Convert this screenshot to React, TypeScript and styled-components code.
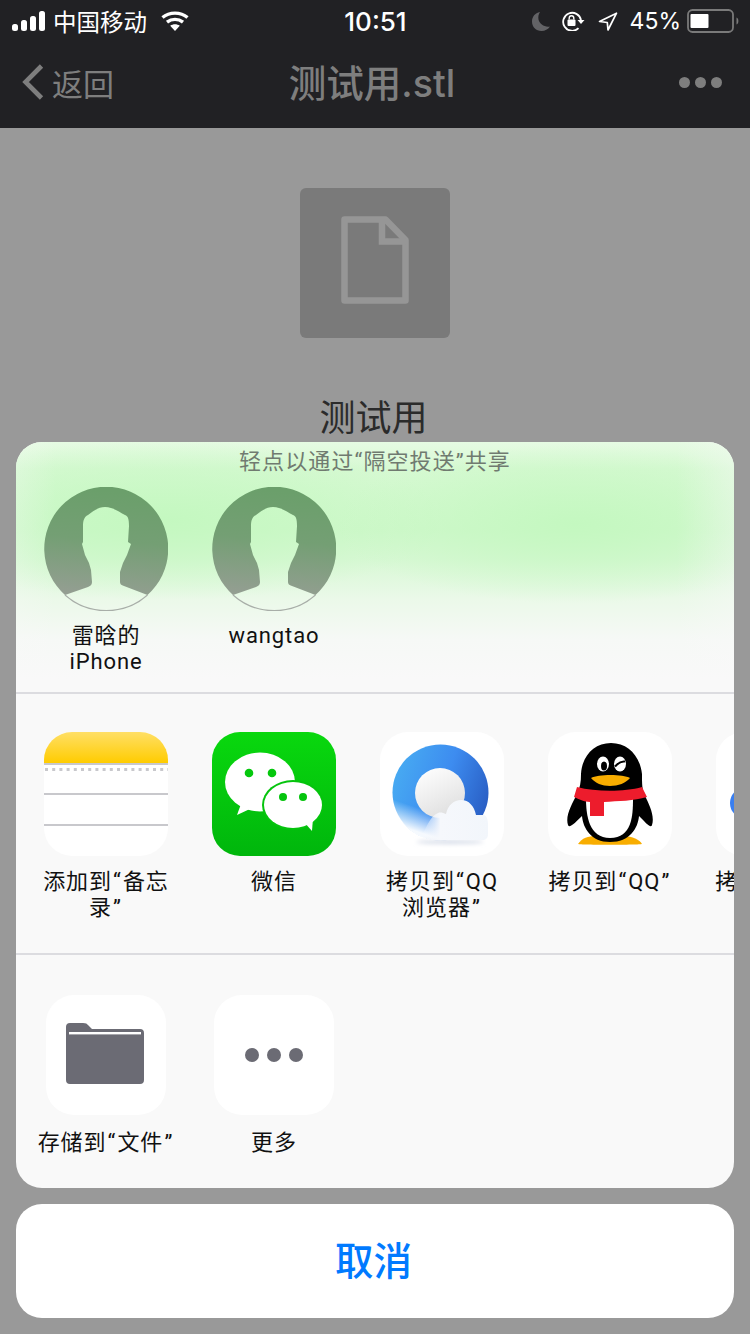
import React from "react";
import styled, { createGlobalStyle } from "styled-components";

const GlobalStyle = createGlobalStyle`
  html, body {
    margin: 0;
    padding: 0;
    background: #999;
  }
`;

const FONT = `Inter, "Noto Sans CJK SC", sans-serif`;
const LABEL_FONT = `Roboto, "Noto Sans CJK SC", sans-serif`;

const Page = styled.div`
  position: relative;
  width: 750px;
  height: 1334px;
  overflow: hidden;
  background: #999;
  font-family: ${FONT};
`;

const Header = styled.header`
  height: 128px;
  background: #212124;
`;

const StatusBar = styled.div`
  display: grid;
  grid-template-columns: 1fr auto 1fr;
  align-items: center;
  height: 42px;
  padding: 0 11px 0 12px;
  color: #fff;
`;

const StatusGroup = styled.div<{ $end?: boolean }>`
  display: flex;
  align-items: center;
  justify-content: ${(p) => (p.$end ? "flex-end" : "flex-start")};
  gap: ${(p) => (p.$end ? 12 : 0)}px;
`;

const Carrier = styled.span`
  margin: 0 14px 0 7px;
  font-size: 23.5px;
`;

const Clock = styled.span`
  font-size: 26px;
  font-weight: 500;
`;

const Percent = styled.span`
  margin: 0 -6px 0 0;
  font-size: 23px;
`;

const NavBar = styled.nav`
  display: grid;
  grid-template-columns: 1fr auto 1fr;
  align-items: center;
  height: 86px;
  box-sizing: border-box;
  padding: 0 28px 6px 22px;
  color: #7e7e7e;
`;

const BackLink = styled.div`
  display: flex;
  align-items: center;
  gap: 8px;
  font-size: 31px;
`;

const NavTitle = styled.div`
  margin-bottom: 3px;
  font-size: 37.5px;
  font-weight: 500;
`;

const MoreDots = styled.div`
  display: flex;
  justify-content: flex-end;
  gap: 5px;
`;

const MoreDot = styled.i`
  width: 11px;
  height: 11px;
  border-radius: 50%;
  background: #7e7e7e;
`;

const FileBody = styled.main`
  display: flex;
  flex-direction: column;
  align-items: center;
  padding-top: 60px;
`;

const FileThumb = styled.div`
  display: flex;
  align-items: center;
  justify-content: center;
  width: 150px;
  height: 150px;
  box-sizing: border-box;
  padding-bottom: 7px;
  border-radius: 6px;
  background: #7a7a7a;
`;

const FileName = styled.div`
  margin-top: 56px;
  padding-right: 3px;
  color: #2b2b2b;
  font-size: 36px;
  line-height: 48px;
`;

const SheetStack = styled.div`
  position: absolute;
  left: 16px;
  right: 16px;
  bottom: 16px;
  display: flex;
  flex-direction: column;
  gap: 16px;
`;

const Sheet = styled.section`
  overflow: hidden;
  border-radius: 26px;
  background: #f9f9f9;
`;

const AirDropSection = styled.div`
  height: 250px;
  box-sizing: border-box;
  background:
    linear-gradient(90deg, rgba(249, 249, 249, 0.25) 0, rgba(249, 249, 249, 0) 40px, rgba(249, 249, 249, 0) 660px, rgba(249, 249, 249, 0.4) 100%),
    radial-gradient(ellipse 240px 80px at 560px 82px, #c4f8c0 0%, rgba(196, 248, 192, 0) 100%),
    radial-gradient(ellipse 280px 80px at 150px 78px, #c4f8c0 0%, rgba(196, 248, 192, 0) 100%),
    linear-gradient(180deg, #e6fbe3 0%, #d6f9d2 11%, #d0f8cc 35%, #d8f8d5 47%, #ebf9e9 63%, #f6f9f6 79%, #f9f9f9 95%);
`;

const AirDropHint = styled.div`
  height: 45px;
  padding-top: 5px;
  box-sizing: border-box;
  color: #707a70;
  font-family: ${LABEL_FONT};
  font-size: 22px;
  letter-spacing: 1.1px;
  line-height: 30px;
  text-align: center;
`;

const Row = styled.div<{ $height: number; $top?: number }>`
  display: flex;
  gap: 16px;
  height: ${(p) => p.$height}px;
  box-sizing: border-box;
  padding: ${(p) => p.$top ?? 0}px 0 0 14px;
  overflow: hidden;
`;

const RowDivider = styled.div`
  border-top: 2px solid #dcdce0;
`;

const Cell = styled.div`
  flex: 0 0 152px;
  display: flex;
  flex-direction: column;
  align-items: center;
`;

const Tile = styled.div<{ $small?: boolean }>`
  flex: none;
  width: ${(p) => (p.$small ? 120 : 124)}px;
  height: ${(p) => (p.$small ? 120 : 124)}px;
  margin: ${(p) => (p.$small ? 2 : 0)}px;
  overflow: hidden;
  border-radius: 28px;
  background: #fff;

  svg {
    display: block;
  }
`;

const Avatar = styled.div`
  width: 124px;
  height: 124px;

  svg {
    display: block;
  }
`;

const Label = styled.div<{ $gap?: number }>`
  width: 140px;
  margin-top: ${(p) => p.$gap ?? 13}px;
  color: #111;
  font-family: ${LABEL_FONT};
  font-size: 22px;
  letter-spacing: 0.9px;
  line-height: 26px;
  text-align: center;
`;

// the curly quotes sit wider on the device than in Roboto
const Quote = styled.span`
  margin: 0 1.2px;
`;

const CancelButton = styled.button`
  display: block;
  width: 100%;
  height: 114px;
  padding: 0 3px 6px 0;
  border: 0;
  border-radius: 26px;
  background: #fff;
  color: #007aff;
  font-family: inherit;
  font-size: 38.5px;
  font-weight: 500;
`;

const SignalIcon = () => (
  <svg width="34" height="20" viewBox="0 0 34 20">
    <rect x="0" y="13" width="6" height="7" rx="2.5" fill="#fff" />
    <rect x="9" y="9" width="6" height="11" rx="2.5" fill="#fff" />
    <rect x="18" y="5" width="6" height="15" rx="2.5" fill="#fff" />
    <rect x="27" y="0" width="6" height="20" rx="2.5" fill="#fff" />
  </svg>
);

const WifiIcon = () => (
  <svg width="28" height="20" viewBox="0 0 28 20" fill="none" stroke="#fff" strokeWidth="3.4">
    <path d="M1.5 6.5C8.5 .6 19.5 .6 26.5 6.5" />
    <path d="M6 11.2C10.8 7.4 17.2 7.4 22 11.2" />
    <path d="M14 20l-4.8-5.2c2.8-2 6.8-2 9.6 0z" fill="#fff" stroke="none" />
  </svg>
);

const MoonIcon = () => (
  <svg width="18" height="19" viewBox="0 0 18 19">
    <path d="M8 0C3 1 0 4.800 0 9.500 0 15 4 19 9.500 19 13 19 16 17.300 18 14.500 12.500 15.500 7.500 12 6.500 7.500 6 4.800 6.500 2.200 8 0z" fill="#636366" />
  </svg>
);

const RotationLockIcon = () => (
  <svg width="24" height="20" viewBox="0 0 24 20" fill="none" stroke="#fff" strokeWidth="1.800">
    <path d="M16.500 17.200A9 9 0 1 1 19 9" />
    <path d="M15.500 9h7l-3.500 4z" fill="#fff" stroke="none" />
    <rect x="5.500" y="8.500" width="8" height="6.500" rx="1" fill="#fff" stroke="none" />
    <path d="M7.200 8.500V7a2.300 2.300 0 0 1 4.600 0v1.500" strokeWidth="1.400" />
  </svg>
);

const LocationIcon = () => (
  <svg width="20" height="19" viewBox="0 0 20 19" fill="none" stroke="#fff" strokeWidth="1.700" strokeLinejoin="round">
    <path d="M18.500 1.200L1.500 9.500l7.800 1 .7 7.500z" />
  </svg>
);

const BatteryIcon = () => (
  <svg width="52" height="24" viewBox="0 0 52 24">
    <rect x="1" y="1" width="45" height="22" rx="4.500" fill="none" stroke="#7a7a7a" strokeWidth="1.800" />
    <rect x="3.500" y="5" width="18" height="14" rx="1" fill="#fff" />
    <path d="M49.500 8.500c2.500 .8 2.500 6.200 0 7z" fill="#7a7a7a" />
  </svg>
);

const ChevronIcon = () => (
  <svg width="22" height="36" viewBox="0 0 22 36" fill="none" stroke="#7e7e7e" strokeWidth="4.600">
    <path d="M19.500 2L3.500 18l16 16" />
  </svg>
);

const FileGlyph = () => (
  <svg width="68" height="88" viewBox="0 0 68 88" fill="none" stroke="#969696" strokeWidth="6.500">
    <path d="M3.500 3.500H44.500L64.500 24V84.500H3.500z" strokeLinejoin="round" />
    <path d="M41 3.500V25.500H64.500" />
  </svg>
);

const PersonAvatar = () => (
  <svg width="124" height="124" viewBox="0 0 124 124">
    <defs>
      <linearGradient id="avatarFill" x1="0.1" y1="0" x2="0" y2="1">
        <stop offset="0" stopColor="#6b9f6b" />
        <stop offset="0.45" stopColor="#749f74" />
        <stop offset="1" stopColor="#969e94" />
      </linearGradient>
    </defs>
    <path
      d="M21 108A62 62 0 1 1 103.500 108L80 99C77 98 76 97 76 95L76 85 79 76 83 68 87 57 84 55 85 39C85 32 84 29 81 28 76 26 70 20 61 20 54 20 48 25 44 28 40 30 39 34 39 39L39 55 38 57 41 68 45 76 47 83 48 95C48 97 47 99 44 100z"
      fill="url(#avatarFill)"
    />
    <path d="M21 108A62 62 0 0 0 103.500 108" fill="none" stroke="#a8aea8" strokeWidth="1.200" />
  </svg>
);

const NotesIcon = () => (
  <svg width="124" height="124" viewBox="0 0 124 124">
    <defs>
      <linearGradient id="notesTop" x1="0" y1="0" x2="0" y2="1">
        <stop offset="0" stopColor="#ffdf66" />
        <stop offset="1" stopColor="#ffcc00" />
      </linearGradient>
    </defs>
    <rect width="124" height="31" fill="url(#notesTop)" />
    <rect y="31" width="124" height="2" fill="#c8c8cc" />
    <line x1="1" y1="37.500" x2="124" y2="37.500" stroke="#c8c8cc" strokeWidth="3" strokeDasharray="3 4.200" />
    <rect y="61" width="124" height="2" fill="#c8c8cc" />
    <rect y="92" width="124" height="2" fill="#c8c8cc" />
  </svg>
);

const WeChatIcon = () => (
  <svg width="124" height="124" viewBox="0 0 124 124">
    <defs>
      <linearGradient id="wechatBg" x1="0" y1="0" x2="0" y2="1">
        <stop offset="0" stopColor="#09d80e" />
        <stop offset="1" stopColor="#00b60c" />
      </linearGradient>
    </defs>
    <rect width="124" height="124" fill="url(#wechatBg)" />
    <ellipse cx="48" cy="50" rx="35" ry="29.500" fill="#fff" />
    <path d="M29 72l-4 11 15-7z" fill="#fff" />
    <ellipse cx="81" cy="73" rx="31" ry="25" fill="#05c40d" />
    <ellipse cx="81" cy="73" rx="29" ry="23" fill="#fff" />
    <path d="M92 90l8 9 1-13z" fill="#fff" />
    <circle cx="37" cy="41" r="4.300" fill="#05c80d" />
    <circle cx="60" cy="41" r="4.300" fill="#05c80d" />
    <circle cx="71" cy="65" r="4" fill="#05c40d" />
    <circle cx="91" cy="65" r="4" fill="#05c40d" />
  </svg>
);

const QQBrowserIcon = () => (
  <svg width="124" height="124" viewBox="0 0 124 124">
    <defs>
      <linearGradient id="ringFill" x1="0" y1="0.2" x2="1" y2="0.55">
        <stop offset="0" stopColor="#48adf2" />
        <stop offset="0.55" stopColor="#3d8cf0" />
        <stop offset="1" stopColor="#2a60c6" />
      </linearGradient>
      <linearGradient id="ringFade" x1="0.7" y1="0.55" x2="0.55" y2="1">
        <stop offset="0.5" stopColor="#fff" stopOpacity="0" />
        <stop offset="1" stopColor="#fff" stopOpacity="0.95" />
      </linearGradient>
      <linearGradient id="ballFill" x1="0.2" y1="0" x2="0.7" y2="1">
        <stop offset="0" stopColor="#fefefe" />
        <stop offset="1" stopColor="#dedede" />
      </linearGradient>
      <linearGradient id="cloudFill" x1="0" y1="0" x2="1" y2="0">
        <stop offset="0" stopColor="#f8fafd" stopOpacity="0" />
        <stop offset="0.3" stopColor="#f6f8fc" />
        <stop offset="1" stopColor="#f2f6fb" />
      </linearGradient>
      <filter id="cloudShadow" x="-20%" y="-100%" width="140%" height="300%">
        <feGaussianBlur stdDeviation="2" />
      </filter>
    </defs>
    <circle cx="60.500" cy="60.500" r="48" fill="url(#ringFill)" />
    <circle cx="60.500" cy="60.500" r="48.500" fill="url(#ringFade)" />
    <circle cx="60" cy="61" r="25" fill="url(#ballFill)" />
    <ellipse cx="70" cy="110" rx="34" ry="2" fill="#d6dce8" filter="url(#cloudShadow)" />
    <path
      d="M40 108C46 96 50 84 58 81 61 80 63 81 66 82 68 73 74 68 81 68 89 68 94 74 96 83L104 83C107 84 108 88 108 92V102C108 106 106 108 102 108z"
      fill="url(#cloudFill)"
    />
  </svg>
);

const QQPenguinIcon = () => (
  <svg width="124" height="124" viewBox="0 0 124 124">
    <path d="M30 112C34 106 40 104 48 104H76C84 104 92 108 94 112 92 113 32 113 30 112z" fill="#f8ad00" />
    <path d="M63 11C46 11 34 24 33 42 33 50 32 56 29 62 24 72 17 84 20 93 21 97 28 90 34 84 35 96 43 110 62 110 82 110 90 96 91 84 97 90 103 97 104 93 107 84 101 72 97 64 94 58 94 52 94 42 92 24 80 11 63 11z" fill="#000" />
    <path d="M38 66C38 84 41 106 62 106 84 106 85 84 85 66z" fill="#fff" />
    <path d="M29 55C48 60 76 60 94 55L99 65C86 69 70 69 56 70V84H42V70C36 70 31 67 26 65z" fill="#ed1c2c" />
    <ellipse cx="55" cy="32" rx="6" ry="7.500" fill="#fff" />
    <ellipse cx="72" cy="32" rx="6" ry="7.500" fill="#fff" />
    <ellipse cx="56" cy="34" rx="3" ry="4.500" fill="#000" />
    <path d="M67 34.500c3-3.500 7-5.500 10-5" fill="none" stroke="#000" strokeWidth="2" />
    <path d="M43 46C50 42 75 42 82 46 78 51 70 54 62 54 54 54 47 51 43 46z" fill="#f8ad00" />
  </svg>
);

const PartialAppIcon = () => (
  <svg width="124" height="124" viewBox="0 0 124 124">
    <circle cx="30" cy="71" r="16" fill="#3a7ff0" />
  </svg>
);

const FolderIcon = () => (
  <svg width="120" height="120" viewBox="0 0 120 120">
    <path d="M20 32a4 4 0 0 1 4-4H37c3 0 4 .8 5.500 2.500L46 34H94a4 4 0 0 1 4 4V85a4 4 0 0 1-4 4H24a4 4 0 0 1-4-4z" fill="#6b6b74" />
    <rect x="23" y="37" width="72" height="2.400" fill="#fff" />
  </svg>
);

const MoreIcon = () => (
  <svg width="120" height="120" viewBox="0 0 120 120" fill="#6b6b74">
    <circle cx="38" cy="60" r="7" />
    <circle cx="60" cy="60" r="7" />
    <circle cx="82" cy="60" r="7" />
  </svg>
);

const App = () => (
  <Page>
    <GlobalStyle />
    <Header>
      <StatusBar>
        <StatusGroup>
          <SignalIcon />
          <Carrier>中国移动</Carrier>
          <WifiIcon />
        </StatusGroup>
        <Clock>10:51</Clock>
        <StatusGroup $end>
          <MoonIcon />
          <RotationLockIcon />
          <LocationIcon />
          <Percent>45%</Percent>
          <BatteryIcon />
        </StatusGroup>
      </StatusBar>
      <NavBar>
        <BackLink>
          <ChevronIcon />
          返回
        </BackLink>
        <NavTitle>测试用.stl</NavTitle>
        <MoreDots>
          <MoreDot />
          <MoreDot />
          <MoreDot />
        </MoreDots>
      </NavBar>
    </Header>

    <FileBody>
      <FileThumb>
        <FileGlyph />
      </FileThumb>
      <FileName>测试用</FileName>
    </FileBody>

    <SheetStack>
      <Sheet>
        <AirDropSection>
          <AirDropHint>轻点以通过“隔空投送”共享</AirDropHint>
          <Row $height={205}>
            <Cell>
              <Avatar>
                <PersonAvatar />
              </Avatar>
              <Label $gap={12}>
                雷晗的
                <br />
                iPhone
              </Label>
            </Cell>
            <Cell>
              <Avatar>
                <PersonAvatar />
              </Avatar>
              <Label $gap={12}>wangtao</Label>
            </Cell>
          </Row>
        </AirDropSection>
        <RowDivider />
        <Row $height={259} $top={38}>
          <Cell>
            <Tile>
              <NotesIcon />
            </Tile>
            <Label>
              添加到<Quote>“</Quote>备忘
              <br />
              录<Quote>”</Quote>
            </Label>
          </Cell>
          <Cell>
            <Tile>
              <WeChatIcon />
            </Tile>
            <Label>微信</Label>
          </Cell>
          <Cell>
            <Tile>
              <QQBrowserIcon />
            </Tile>
            <Label>
              拷贝到<Quote>“</Quote>QQ
              <br />
              浏览器<Quote>”</Quote>
            </Label>
          </Cell>
          <Cell>
            <Tile>
              <QQPenguinIcon />
            </Tile>
            <Label>
              拷贝到<Quote>“</Quote>QQ<Quote>”</Quote>
            </Label>
          </Cell>
          <Cell>
            <Tile>
              <PartialAppIcon />
            </Tile>
            <Label>
              拷贝到<Quote>“</Quote>百度
            </Label>
          </Cell>
        </Row>
        <RowDivider />
        <Row $height={233} $top={38}>
          <Cell>
            <Tile $small>
              <FolderIcon />
            </Tile>
            <Label>
              存储到<Quote>“</Quote>文件<Quote>”</Quote>
            </Label>
          </Cell>
          <Cell>
            <Tile $small>
              <MoreIcon />
            </Tile>
            <Label>更多</Label>
          </Cell>
        </Row>
      </Sheet>
      <CancelButton>取消</CancelButton>
    </SheetStack>
  </Page>
);

export default App;
